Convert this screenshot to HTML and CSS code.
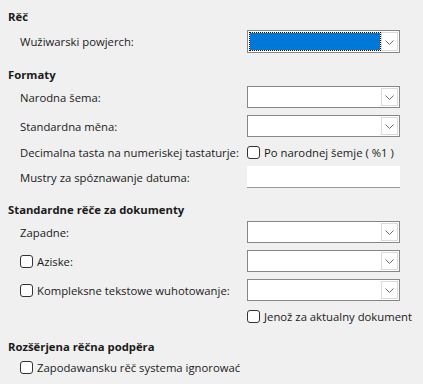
FILE: index.html
```html
<!DOCTYPE html>
<html lang="hsb">
<head>
<meta charset="utf-8">
<link rel="stylesheet" href="styles.css">
</head>
<body>
<div class="page">
  <div class="heading h1">Rěč</div>
  <div class="row r-ui">
    <span class="label">Wužiwarski powjerch:</span>
    <div class="combo sel">
      <div class="value"><div class="focus"></div></div>
      <div class="btn"><svg width="9" height="5" viewBox="0 0 9 5"><path d="M0.5 0.5 L4.5 4.5 L8.5 0.5" fill="none" stroke="#6d6d6d" stroke-width="1"/></svg></div>
    </div>
  </div>

  <div class="heading h2">Formaty</div>
  <div class="row r-a">
    <span class="label">Narodna šema:</span>
    <div class="combo">
      <div class="value"></div>
      <div class="btn"><svg width="9" height="5" viewBox="0 0 9 5"><path d="M0.5 0.5 L4.5 4.5 L8.5 0.5" fill="none" stroke="#6d6d6d" stroke-width="1"/></svg></div>
    </div>
  </div>
  <div class="row r-b">
    <span class="label">Standardna měna:</span>
    <div class="combo">
      <div class="value"></div>
      <div class="btn"><svg width="9" height="5" viewBox="0 0 9 5"><path d="M0.5 0.5 L4.5 4.5 L8.5 0.5" fill="none" stroke="#6d6d6d" stroke-width="1"/></svg></div>
    </div>
  </div>
  <div class="row r-check">
    <span class="label">Decimalna tasta na numeriskej tastaturje:</span>
    <label class="check"><span class="box"></span><span>Po narodnej šemje ( %1 )</span></label>
  </div>
  <div class="row r-input">
    <span class="label">Mustry za spóznawanje datuma:</span>
    <div class="input"></div>
  </div>

  <div class="heading h3">Standardne rěče za dokumenty</div>
  <div class="row r-a">
    <span class="label">Zapadne:</span>
    <div class="combo">
      <div class="value"></div>
      <div class="btn"><svg width="9" height="5" viewBox="0 0 9 5"><path d="M0.5 0.5 L4.5 4.5 L8.5 0.5" fill="none" stroke="#6d6d6d" stroke-width="1"/></svg></div>
    </div>
  </div>
  <div class="row r-b">
    <label class="check"><span class="box"></span><span>Aziske:</span></label>
    <div class="combo">
      <div class="value"></div>
      <div class="btn"><svg width="9" height="5" viewBox="0 0 9 5"><path d="M0.5 0.5 L4.5 4.5 L8.5 0.5" fill="none" stroke="#6d6d6d" stroke-width="1"/></svg></div>
    </div>
  </div>
  <div class="row r-b2">
    <label class="check"><span class="box"></span><span>Kompleksne tekstowe wuhotowanje:</span></label>
    <div class="combo">
      <div class="value"></div>
      <div class="btn"><svg width="9" height="5" viewBox="0 0 9 5"><path d="M0.5 0.5 L4.5 4.5 L8.5 0.5" fill="none" stroke="#6d6d6d" stroke-width="1"/></svg></div>
    </div>
  </div>
  <div class="row r-only">
    <span class="label"></span>
    <label class="check"><span class="box"></span><span>Jenož za aktualny dokument</span></label>
  </div>

  <div class="heading h4">Rozšěrjena rěčna podpěra</div>
  <div class="row r-last">
    <label class="check"><span class="box"></span><span>Zapodawansku rěč systema ignorować</span></label>
  </div>
</div>
</body>
</html>
```

FILE: styles.css
```css
html, body {
  margin: 0;
  padding: 0;
  background: #f0f0f0;
}
body {
  font-family: "Open Sans", "Noto Sans", sans-serif;
  font-size: 11.3px;
  color: #1a1a1a;
  width: 423px;
  height: 384px;
  overflow: hidden;
}
.page {
  display: flex;
  flex-direction: column;
  padding: 9px 0 0 8px;
}
.heading {
  font-weight: 700;
  height: 16px;
  line-height: 16px;
}
.h2 { margin-top: 14px; }
.h3 { margin-top: 14px; }
.h4 { margin-top: 14px; }

.row {
  display: grid;
  grid-template-columns: 227px 153px;
  align-items: center;
  padding-left: 12px;
  height: 22px;
}
.r-ui { margin-top: 5px; height: 23px; }
.r-a { margin-top: 3px; }
.r-b { margin-top: 7px; }
.r-b2 { margin-top: 7px; }
.r-check { margin-top: 6px; height: 18px; }
.r-input { margin-top: 5px; }
.r-only { margin-top: 6px; height: 18px; }
.r-last { margin-top: 3px; height: 18px; }

.label {
  white-space: nowrap;
}

.combo {
  box-sizing: border-box;
  height: 100%;
  border: 1px solid #868686;
  background: #fff;
  display: flex;
  align-items: stretch;
}
.combo .value {
  flex: 1;
  padding: 1px 0 1px 1px;
  display: flex;
}
.combo .focus {
  flex: 1;
  border: 1px dotted #000;
  background: #0078d7;
  background-clip: padding-box;
}
.combo .btn {
  box-sizing: border-box;
  width: 17px;
  margin: 1px 1px 1px 0;
  border: 1px solid #dadada;
  background: #fff;
  display: flex;
  align-items: center;
  justify-content: center;
}
.combo .btn svg {
  display: block;
  margin-top: 1px;
}

.input {
  box-sizing: border-box;
  height: 100%;
  background: #fff;
  border-bottom: 1px solid #9a9a9a;
}

.check {
  display: flex;
  align-items: center;
  gap: 4px;
  white-space: nowrap;
}
.box {
  box-sizing: border-box;
  width: 13px;
  height: 13px;
  border: 1px solid #333;
  border-radius: 3px;
  background: #fff;
  flex: none;
}
```
